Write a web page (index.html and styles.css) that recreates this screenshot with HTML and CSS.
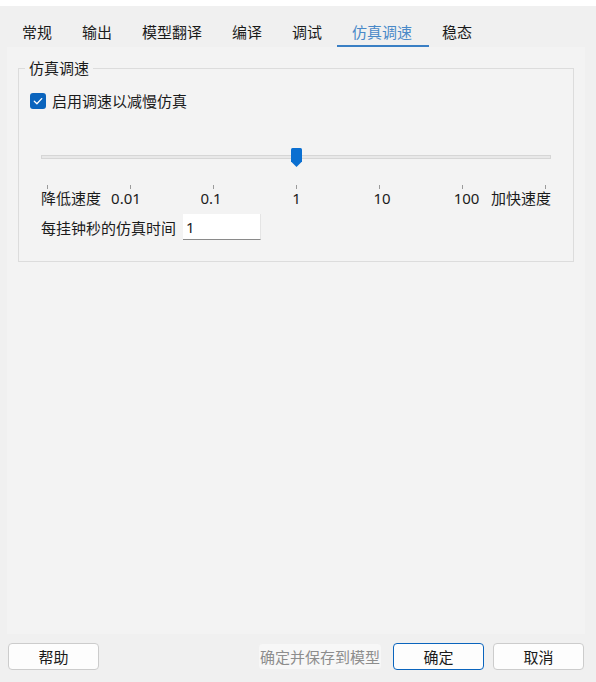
FILE: index.html
```html
<!DOCTYPE html>
<html>
<head>
	<meta charset="utf-8">
	<title>仿真设置</title>

	<link rel="stylesheet" href="styles.css">

</head>
<body>

	<div class="topstrip"></div>

	<div class="tabs">
		<div class="tab">常规</div>
		<div class="tab">输出</div>
		<div class="tab">模型翻译</div>
		<div class="tab">编译</div>
		<div class="tab">调试</div>
		<div class="tab active">仿真调速</div>
		<div class="tab">稳态</div>
	</div>

	<div class="panel">
		<fieldset class="group">
			<legend>仿真调速</legend>

			<label class="check">
				<span class="box">
					<svg width="16" height="16" viewBox="0 0 16 16"><path d="M4.3 8.3 L6.9 10.8 L11.7 5.6" fill="none" stroke="#fff" stroke-width="1.3" stroke-linecap="round" stroke-linejoin="round"/></svg>
				</span>
				启用调速以减慢仿真
			</label>

			<div class="slider">
				<div class="track"></div>
				<svg class="thumb" width="11" height="19" viewBox="0 0 11 19"><path d="M1.5 0 H9.5 Q11 0 11 1.5 V13.5 L5.5 19 L0 13.5 V1.5 Q0 0 1.5 0 Z" fill="#0a6fd1"/></svg>
			</div>

			<div class="scale">
				<span class="tick"></span><span class="tick"></span><span class="tick"></span><span class="tick"></span><span class="tick"></span><span class="tick"></span><span class="tick"></span>
				<span class="lbl first">降低速度</span>
				<span class="lbl n1">0.01</span>
				<span class="lbl n2">0.1</span>
				<span class="lbl">1</span>
				<span class="lbl n4">10</span>
				<span class="lbl n5">100</span>
				<span class="lbl last">加快速度</span>
			</div>

			<div class="timerow">
				<span>每挂钟秒的仿真时间</span>
				<input class="field" type="text" value="1">
			</div>
		</fieldset>
	</div>

	<div class="buttons">
		<button class="btn">帮助</button>
		<div class="spacer"></div>
		<button class="btn wide" disabled>确定并保存到模型</button>
		<button class="btn primary">确定</button>
		<button class="btn">取消</button>
	</div>

</body>
</html>
```

FILE: styles.css
```css
	html, body{
		height: 100%;
	}

	body{
		margin: 0;
		background: #f0f0f0;
		color: #1b1b1b;
		font-family: "Noto Sans", "Noto Sans CJK SC", sans-serif;
		font-size: 15px;
		display: flex;
		flex-direction: column;
	}

	.topstrip{
		height: 6px;
		background: #fff;
	}

	.tabs{
		display: flex;
		margin: 14px 0 0 7px;
	}

	.tab{
		padding: 0 15px;
		line-height: 25px;
		border-bottom: 2px solid transparent;
		white-space: nowrap;
	}

	.tab.active{
		color: #4a89c8;
		border-bottom-color: #3a7fc4;
		padding-right: 17px;
		margin-right: -2px;
	}

	.panel{
		flex: 1;
		margin: 0 11px 0 7px;
		background: #f3f3f3;
		padding: 11px 11px 0 11px;
	}

	.group{
		margin: 0;
		min-width: 0;
		padding: 0 11px 21px 11px;
		border: 1px solid #dcdcdc;
	}

	.group legend{
		padding: 0 4px;
		margin-left: -5px;
		line-height: 20px;
	}

	.check{
		display: flex;
		align-items: center;
		gap: 6px;
		margin-top: 15px;
		line-height: 16px;
	}

	.box{
		width: 16px;
		height: 16px;
		border-radius: 3px;
		background: #0a64bd;
		display: flex;
	}

	.slider{
		position: relative;
		height: 19px;
		margin: 39px 11px 0 11px;
	}

	.track{
		position: absolute;
		left: 0;
		right: 0;
		top: 7px;
		height: 2px;
		border: 1px solid #d6d6d6;
		background: #e8e8e8;
	}

	.thumb{
		position: absolute;
		top: 0;
		left: 250px;
	}

	/* 7 columns of 83px, centred on the ticks */
	.scale{
		display: grid;
		grid-template-columns: repeat(7, 83px);
		grid-template-rows: 4px 18px;
		margin: 18px 0 0 -24px;
		width: 581px;
	}

	.tick{
		justify-self: center;
		width: 1px;
		height: 4px;
		background: #9a9a9a;
	}

	.lbl{
		justify-self: center;
		line-height: 18px;
		white-space: nowrap;
	}

	.lbl.n1{ margin-right: 9px; }
	.lbl.n2{ margin-right: 5px; }
	.lbl.n4{ margin-left: 5px; }
	.lbl.n5{ margin-left: 8px; }

	.lbl.first{
		justify-self: start;
		margin-left: 35px;
	}

	.lbl.last{
		justify-self: end;
		margin-right: 36px;
	}

	.timerow{
		display: flex;
		align-items: center;
		gap: 7px;
		margin: 7px 0 0 11px;
	}

	.field{
		width: 78px;
		height: 26px;
		box-sizing: border-box;
		border: 0;
		border-bottom: 1px solid #8a8a8a;
		border-right: 1px solid #e4e4e4;
		background: #fff;
		padding: 0 3px;
		font: inherit;
		color: #1b1b1b;
		outline: none;
	}

	.buttons{
		display: flex;
		align-items: center;
		gap: 10px;
		padding: 9px 12px 12px 8px;
	}

	.spacer{
		flex: 1;
	}

	.btn{
		width: 91px;
		height: 27px;
		border: 1px solid #cccccc;
		border-radius: 4px;
		background: #fdfdfd;
		font: inherit;
		color: #1b1b1b;
		padding: 0;
	}

	.btn.wide{
		width: 124px;
		border-color: #f0f0f0;
		background: #f7f7f7;
		color: #8d8d8d;
		margin-right: 1px;
	}

	.btn.primary{
		border-color: #0a64bd;
		margin-right: -1px;
	}
```
